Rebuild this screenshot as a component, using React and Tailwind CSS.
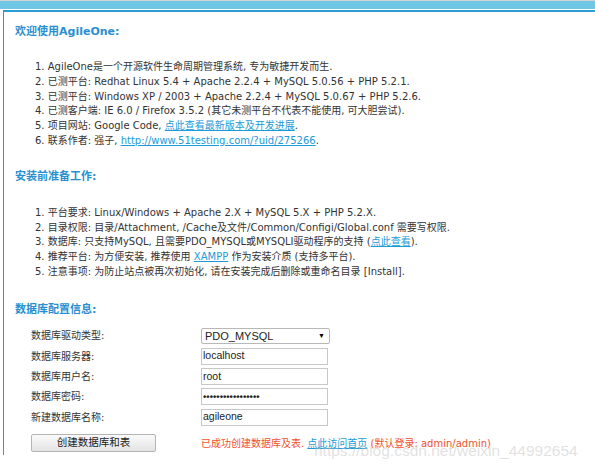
import React from "react";

const font = { fontFamily: '"DejaVu Sans", Verdana, "Noto Sans CJK SC", sans-serif' };
const arial = { fontFamily: '"Liberation Sans", Arial, "Noto Sans CJK SC", sans-serif' };

function Title({ children }) {
  return (
    <div className="text-[11px] font-bold text-[#2a8fd0] leading-[16px]">{children}</div>
  );
}

function Link({ children }) {
  return <span className="text-[#1b9bd7] underline">{children}</span>;
}

function Row({ label, children }) {
  return (
    <div className="flex items-center h-[20.3px]">
      <div className="w-[170px]">{label}</div>
      {children}
    </div>
  );
}

function Input({ value }) {
  return (
    <div className="w-[127px] h-[17px] border border-[#c8c8c8] bg-white flex items-center pl-[1px] text-[10.5px] text-[#222]" style={arial}>
      {value}
    </div>
  );
}

export default function App() {
  return (
    <div className="w-[595px] h-[465px] bg-white overflow-hidden relative text-[10px] text-[#333]" style={font}>
      <div className="h-[1px] bg-[#d4d4d4]" />
      <div className="h-[8px] bg-[#70c7e5]" />
      <div className="h-[1px] bg-white" />
      <div className="ml-[3px] border-t-2 border-l-[1.5px] border-[#2b9dd6] h-[445px] pl-[11px] pt-[12px]">
        <Title>欢迎使用AgileOne:</Title>
        <div className="pl-[20px] pt-[20px] leading-[14.8px]">
          <div>1. AgileOne是一个开源软件生命周期管理系统, 专为敏捷开发而生.</div>
          <div>2. 已测平台: Redhat Linux 5.4 + Apache 2.2.4 + MySQL 5.0.56 + PHP 5.2.1.</div>
          <div>3. 已测平台: Windows XP / 2003 + Apache 2.2.4 + MySQL 5.0.67 + PHP 5.2.6.</div>
          <div>4. 已测客户端: IE 6.0 / Firefox 3.5.2 (其它未测平台不代表不能使用, 可大胆尝试).</div>
          <div>5. 项目网站: Google Code, <Link>点此查看最新版本及开发进展</Link>.</div>
          <div>6. 联系作者: 强子, <Link>http://www.51testing.com/?uid/275266</Link>.</div>
        </div>
        <div className="pt-[20px]">
          <Title>安装前准备工作:</Title>
        </div>
        <div className="pl-[20px] pt-[21px] leading-[14.8px]">
          <div>1. 平台要求: Linux/Windows + Apache 2.X + MySQL 5.X + PHP 5.2.X.</div>
          <div>2. 目录权限: 目录/Attachment, /Cache及文件/Common/Configi/Global.conf 需要写权限.</div>
          <div>3. 数据库: 只支持MySQL, 且需要PDO_MYSQL或MYSQLI驱动程序的支持 (<Link>点此查看</Link>).</div>
          <div>4. 推荐平台: 为方便安装, 推荐使用 <Link>XAMPP</Link> 作为安装介质 (支持多平台).</div>
          <div>5. 注意事项: 为防止站点被再次初始化, 请在安装完成后删除或重命名目录 [Install].</div>
        </div>
        <div className="pt-[22px]">
          <Title>数据库配置信息:</Title>
        </div>
        <div className="pl-[16px] pt-[8px]">
          <Row label="数据库驱动类型:">
            <div className="w-[129px] h-[16px] border border-[#b8b8b8] rounded-[2px] bg-white flex items-center justify-between pl-[3px] pr-[4px] text-[11px] text-[#222]" style={arial}>
              <span>PDO_MYSQL</span>
              <span className="text-[7px] text-black">▼</span>
            </div>
          </Row>
          <Row label="数据库服务器:"><Input value="localhost" /></Row>
          <Row label="数据库用户名:"><Input value="root" /></Row>
          <Row label="数据库密码:"><Input value={<span className="text-[9.5px] font-bold">•••••••••••••••••</span>} /></Row>
          <Row label="新建数据库名称:"><Input value="agileone" /></Row>
          <div className="flex items-center mt-[7px]">
            <div className="w-[125px] h-[18px] border border-[#b4b4b4] rounded-[2px] bg-gradient-to-b from-[#fafafa] to-[#e4e4e4] flex items-center justify-center text-[10.5px] text-[#222]">创建数据库和表</div>
            <div className="ml-[45px] text-[#f2502c]">
              已成功创建数据库及表. <Link>点此访问首页</Link> (默认登录: admin/admin)
            </div>
          </div>
        </div>
      </div>
      <div className="absolute left-[314px] top-[441px] text-[15.5px] text-[#c4c4c4]/50 leading-[20px]" style={arial}>https://blog.csdn.net/weixin_44992654</div>
    </div>
  );
}
